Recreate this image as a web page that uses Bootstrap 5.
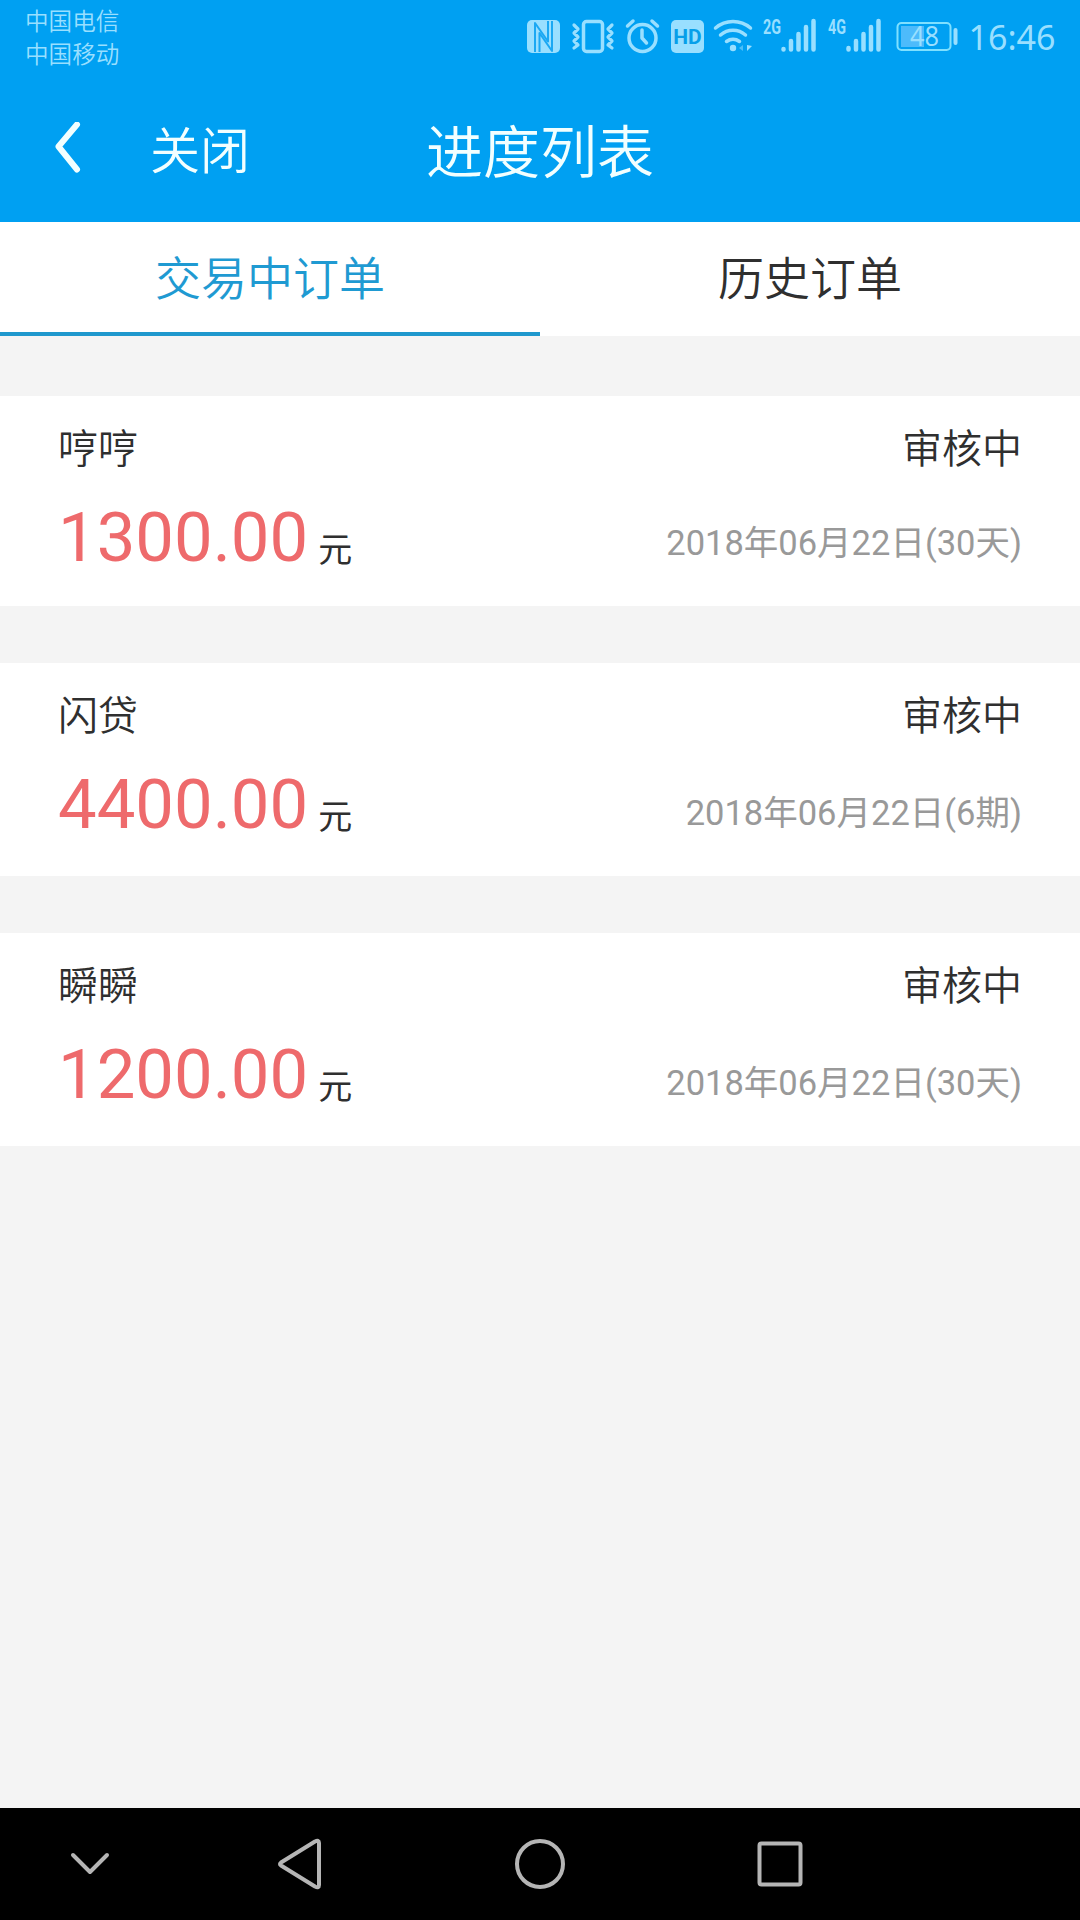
<!DOCTYPE html>
<html lang="zh-CN">
<head>
<meta charset="utf-8">
<meta name="viewport" content="width=device-width, initial-scale=1">
<title>进度列表</title>
<link rel="stylesheet" href="https://cdn.jsdelivr.net/npm/bootstrap@5.3.0/dist/css/bootstrap.min.css">
<style>
body{font-family:Roboto,"Noto Sans CJK SC",sans-serif;background:#f4f4f4;color:#2f2f2f;height:1920px;overflow:hidden}
.top-area{background:#00a0f2;height:222px}
.status-row{height:74px;color:#99dfff}
.carriers{font-size:23.6px;line-height:33px;padding:4px 0 0 25px;font-weight:350;font-family:"Noto Sans CJK SC",sans-serif}
.title-row{height:148px;color:#f2ffff;font-family:"Noto Sans CJK SC",sans-serif;font-weight:350}
.close-text{font-size:50px;line-height:60px;margin:43px 0 0 62px}
.page-title{font-size:57px;line-height:70px;padding-top:39px}
.order-tabs{height:114px;background:#fff;font-size:46px;font-family:"Noto Sans CJK SC",sans-serif;font-weight:350}
.order-tabs .nav-link{color:#2f2f2f;border-bottom:4px solid transparent;height:114px;line-height:64px;padding:21px 0 0;border-radius:0}
.order-tabs .nav-link.active{color:#1f9ad2;border-bottom-color:#1f98cd}
.order-item{background:#fff;padding:20px 58px 0;height:213px;margin-top:57px}
.order-item:first-child{margin-top:60px;height:210px}
.item-head{font-size:40px;line-height:60px;margin-bottom:21px;font-family:"Noto Sans CJK SC",sans-serif;font-weight:350}
.amount{color:#ee6a6c;font-size:68.8px;line-height:82px}
.unit{font-size:34px;line-height:50px;margin-left:10px;position:relative;top:1px}
.due{font-size:34.5px;line-height:50px;color:#999;padding-top:24px}
.order-item:first-child .due{padding-top:21px}
.sys-nav{height:112px;background:#000}
</style>
</head>
<body class="d-flex flex-column">
<header class="top-area flex-shrink-0">
  <div class="status-row d-flex justify-content-between">
    <div class="carriers">中国电信<br>中国移动</div>
    <svg width="570" height="74" viewBox="510 0 570 74" fill="none" stroke="#99dfff" stroke-linecap="round" stroke-linejoin="round">
      <rect x="527" y="20" width="33" height="33" rx="5" fill="#99dfff" stroke="none"/>
      <path d="M535 52V23L548 41.500V21M539.500 52V33L552 51V21" stroke="#1ba8f3" stroke-width="2" stroke-linecap="butt"/>
      <rect x="583.500" y="21.500" width="19" height="30" rx="3" stroke-width="3.500"/>
      <path d="M574 25l4 4-4 4 4 4-4 4 4 4-4 3M612 25l-4 4 4 4-4 4 4 4-4 4 4 3" stroke-width="3.200"/>
      <circle cx="642.500" cy="38" r="13.500" stroke-width="3.500"/>
      <path d="M642 30v8l4.500 5M627.500 26l5.500-5M657.500 26l-5.500-5" stroke-width="3.500"/>
      <rect x="671" y="20" width="33" height="33" rx="5" fill="#99dfff" stroke="none"/>
      <text x="687.500" y="44" font-family="Roboto" font-weight="700" font-size="21" text-anchor="middle" fill="#079fe9" stroke="none">HD</text>
      <path d="M715.500 28a27 27 0 0 1 35 0M720.500 35a19 19 0 0 1 25 0M726.500 41.500a11 11 0 0 1 13 0" stroke-width="3.500"/>
      <circle cx="733" cy="48" r="3.200" fill="#99dfff" stroke="none"/>
      <path d="M743 45v6l-4-3z" fill="#4dbff8" stroke="none"/><path d="M747 45v6l5-5z" fill="#99dfff" stroke="none"/>
      <g fill="#99dfff" stroke="none" font-family="Roboto" font-weight="700" font-size="20">
        <text x="763" y="34" textLength="18" lengthAdjust="spacingAndGlyphs">2G</text>
        <text x="828" y="34" textLength="18" lengthAdjust="spacingAndGlyphs">4G</text>
      </g>
      <path d="M783.500 49v.5M791 41v8.500M798.500 34v15.500M806 27v22.500M813.500 21v28.500M848.500 48v1.500M856 41v8.500M863.500 34v15.500M871 27v22.500M878.500 21v28.500" stroke-width="4.500"/>
      <rect x="897.500" y="23" width="53" height="27" rx="4" stroke-width="2" stroke="#7fe0ff"/>
      <rect x="901" y="26" width="23" height="21" fill="#4dbbfb" stroke="none"/>
      <path d="M955.500 30v13" stroke-width="4"/>
      <text x="924.500" y="46" font-family="Noto Sans" font-size="27" text-anchor="middle" textLength="29" lengthAdjust="spacingAndGlyphs" fill="#99dfff" stroke="none">48</text>
      <text x="968.500" y="50" font-family="Noto Sans" font-size="34.500" textLength="87" lengthAdjust="spacingAndGlyphs" fill="#99dfff" stroke="none">16:46</text>
    </svg>
  </div>
  <div class="title-row row g-0">
    <div class="col-4 d-flex">
      <svg class="ms-5 mt-5" width="40" height="56" viewBox="48 122 40 56" fill="none" stroke="#f2ffff" stroke-width="6" stroke-linecap="round" stroke-linejoin="round"><path d="M77 124.500L58.500 146.500L77 169.500"/></svg>
      <a class="close-text text-reset text-decoration-none" href="#">关闭</a>
    </div>
    <div class="page-title col-4 text-center">进度列表</div>
  </div>
</header>
<nav class="order-tabs nav nav-justified flex-shrink-0">
  <a class="nav-link active" href="#">交易中订单</a>
  <a class="nav-link" href="#">历史订单</a>
</nav>
<main class="flex-grow-1">
  <section class="order-item">
    <div class="item-head d-flex justify-content-between"><span>哼哼</span><span>审核中</span></div>
    <div class="d-flex justify-content-between align-items-start"><div><span class="amount">1300.00</span><span class="unit">元</span></div><span class="due">2018年06月22日(30天)</span></div>
  </section>
  <section class="order-item">
    <div class="item-head d-flex justify-content-between"><span>闪贷</span><span>审核中</span></div>
    <div class="d-flex justify-content-between align-items-start"><div><span class="amount">4400.00</span><span class="unit">元</span></div><span class="due">2018年06月22日(6期)</span></div>
  </section>
  <section class="order-item">
    <div class="item-head d-flex justify-content-between"><span>瞬瞬</span><span>审核中</span></div>
    <div class="d-flex justify-content-between align-items-start"><div><span class="amount">1200.00</span><span class="unit">元</span></div><span class="due">2018年06月22日(30天)</span></div>
  </section>
</main>
<footer class="sys-nav flex-shrink-0">
  <svg width="1080" height="112" viewBox="0 1808 1080 112" fill="none" stroke="#b5b5b5" stroke-width="4" stroke-linecap="round" stroke-linejoin="round">
    <path d="M73 1855l17 17 17-17"/>
    <path d="M281 1862.500q-2 1.500 0 3l34 21q4 2 4-1.500v-42q0-3.500-4-1.500z"/>
    <circle cx="540" cy="1864" r="23"/>
    <rect x="759.500" y="1843.500" width="41" height="41" rx="2"/>
  </svg>
</footer>
<script src="https://cdn.jsdelivr.net/npm/bootstrap@5.3.0/dist/js/bootstrap.bundle.min.js"></script>
</body>
</html>
